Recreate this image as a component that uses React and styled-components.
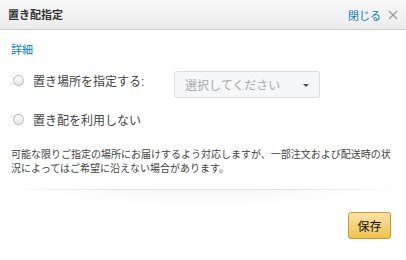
import React from "react";
import styled, { createGlobalStyle } from "styled-components";

const GlobalStyle = createGlobalStyle`
  html, body {
    margin: 0;
    padding: 0;
    background: #fff;
  }
  body {
    font-family: "Liberation Sans", "Noto Sans CJK JP", sans-serif;
    color: #111;
  }
`;

const Dialog = styled.div`
  width: 406px;
  height: 260px;
  display: flex;
  flex-direction: column;
  overflow: hidden;
`;

const Header = styled.div`
  height: 29px;
  display: flex;
  align-items: center;
  justify-content: space-between;
  padding: 0 8px;
  background: linear-gradient(to bottom, #f8f8f8, #ececec);
  border-bottom: 1px solid #cccccc;
`;

const Title = styled.h1`
  margin: 0;
  font-size: 11px;
  font-weight: bold;
  color: #333;
  line-height: 16px;
`;

const CloseButton = styled.button`
  display: flex;
  align-items: center;
  gap: 7px;
  padding: 0;
  border: 0;
  background: none;
  font-family: inherit;
  font-size: 11px;
  color: #0a7cc4;
  cursor: pointer;
`;

const Body = styled.div`
  padding: 13px 11px 0;
  display: flex;
  flex-direction: column;
`;

const Link = styled.a`
  font-size: 11px;
  line-height: 14px;
  color: #0a7cc4;
  text-decoration: none;
`;

const Row = styled.div`
  display: flex;
  align-items: flex-start;
  margin-top: ${({ $top }) => $top}px;
`;

const Option = styled.label`
  width: 163px;
  height: 18px;
  display: flex;
  align-items: center;
  gap: 9px;
  font-size: 12px;
  color: #444;
  padding-left: 2px;
  box-sizing: border-box;
`;

const Radio = styled.span`
  width: 11px;
  height: 11px;
  border-radius: 50%;
  border: 1px solid #b9b9b9;
  background: linear-gradient(to bottom, #fdfdfd, #e6e6e6);
  box-sizing: border-box;
  flex-shrink: 0;
`;

const Select = styled.div`
  width: 146px;
  height: 27px;
  box-sizing: border-box;
  display: flex;
  align-items: center;
  justify-content: space-between;
  padding: 0 10px 0 10px;
  border: 1px solid #dddddd;
  border-radius: 3px;
  background: #f6f7f9;
  font-size: 12px;
  color: #aaaaaa;
`;

const Caret = styled.span`
  width: 0;
  height: 0;
  border-left: 3px solid transparent;
  border-right: 3px solid transparent;
  border-top: 3px solid #555;
  margin-top: 2px;
`;

const Note = styled.p`
  margin: 20px 0 0;
  font-size: 10px;
  line-height: 14px;
  color: #444;
`;

const Divider = styled.div`
  margin: 13px 4px 0;
  height: 16px;
  border-top: 1px solid transparent;
  border-image: linear-gradient(to right, rgba(0,0,0,0), rgba(0,0,0,0.12) 30%, rgba(0,0,0,0.12) 70%, rgba(0,0,0,0)) 1;
  background: radial-gradient(ellipse at top, rgba(0,0,0,0.035), rgba(0,0,0,0) 70%);
`;

const Footer = styled.div`
  display: flex;
  justify-content: flex-end;
  padding: 6px 15px 0;
`;

const SaveButton = styled.button`
  width: 43px;
  height: 27px;
  padding: 0;
  border: 1px solid #c89a2a;
  border-radius: 3px;
  background: linear-gradient(to bottom, #f8e3a9, #f0c24f);
  font-family: inherit;
  font-size: 12px;
  color: #111;
  cursor: pointer;
`;

function CloseIcon() {
  return (
    <svg width="10" height="10" viewBox="0 0 10 10">
      <path d="M1 1 L9 9 M9 1 L1 9" stroke="#9a9a9a" strokeWidth="1.2" />
    </svg>
  );
}

export default function App() {
  return (
    <>
      <GlobalStyle />
      <Dialog>
        <Header>
          <Title>置き配指定</Title>
          <CloseButton>
            閉じる
            <CloseIcon />
          </CloseButton>
        </Header>
        <Body>
          <Link href="#">詳細</Link>
          <Row $top={14}>
            <Option>
              <Radio />
              置き場所を指定する:
            </Option>
            <Select>
              選択してください
              <Caret />
            </Select>
          </Row>
          <Row $top={12}>
            <Option>
              <Radio />
              置き配を利用しない
            </Option>
          </Row>
          <Note>
            可能な限りご指定の場所にお届けするよう対応しますが、一部注文および配送時の状況によってはご希望に沿えない場合があります。
          </Note>
        </Body>
        <Divider />
        <Footer>
          <SaveButton>保存</SaveButton>
        </Footer>
      </Dialog>
    </>
  );
}
